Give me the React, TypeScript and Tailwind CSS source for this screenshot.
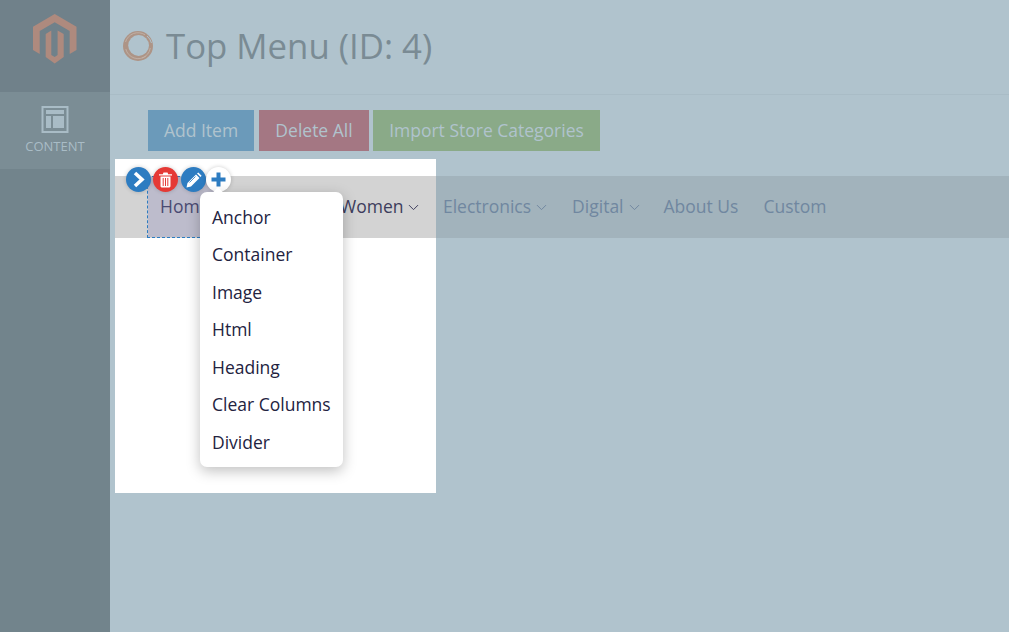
import { ChevronDown } from "lucide-react";

const font = "font-['Open_Sans','Noto_Sans',sans-serif]";

function Caret() {
  return <ChevronDown size={17} strokeWidth={1.4} className="ml-[2px] mr-[1px] mt-[2px]" />;
}

function Logo() {
  return (
    <svg width="44" height="50" viewBox="0 0 44 50">
      <path d="M21.7 0 L43.5 12.7 V36 L36.7 40 V17 L21.7 8.3 L6.7 17 V40 L0 36 V12.7 Z" fill="#ae8a7e" />
      <path d="M12.7 20 L18.3 16.5 V41 L21.7 43 L24.6 41 V16.5 L30.7 20 V43 L21.7 49.5 L12.7 43 Z" fill="#ae8a7e" />
    </svg>
  );
}

function Ring() {
  return (
    <svg width="32" height="32" viewBox="0 0 32 32" fill="none">
      <circle cx="16" cy="16" r="15" fill="#ad9486" />
      <circle cx="16.6" cy="15.5" r="10.4" fill="#b0c3cd" />
      <path d="M3.8 19 A12.8 12.8 0 0 0 24 26" stroke="#c4b5ab" strokeWidth="0.8" />
      <path d="M3.5 12 A13 13 0 0 1 23 4.8" stroke="#c4b5ab" strokeWidth="0.8" />
      <path d="M28.3 18 A13 13 0 0 1 20 28" stroke="#c4b5ab" strokeWidth="0.8" />
      <path d="M25 6 A14 14 0 0 1 29.5 13" stroke="#b0c3cd" strokeWidth="1" />
    </svg>
  );
}

export default function App() {
  const items = ["Anchor", "Container", "Image", "Html", "Heading", "Clear Columns", "Divider"];
  return (
    <div className={`${font} flex h-[632px] w-[1009px] overflow-hidden bg-[#b0c3cd]`}>
      <aside className="flex w-[110px] shrink-0 flex-col bg-[#72848c]">
        <div className="flex h-[92px] justify-center bg-[#70818a] pt-[14px]">
          <Logo />
        </div>
        <div className="flex h-[77px] flex-col items-center bg-[#7b8d95] pt-[14px] text-[#a9bcc6]">
          <svg width="28" height="28" viewBox="0 0 28 28" fill="none">
            <rect x="1.5" y="1" width="25" height="25" stroke="currentColor" strokeWidth="2" />
            <path d="M5 4 H23 V8 H5 Z M5 10 H10 V22 H5 Z M12 10 H23 V22 H12 Z" fill="currentColor" />
          </svg>
          <span className="mt-[3px] text-[13px] leading-[18px]">CONTENT</span>
        </div>
      </aside>

      <main className="flex min-w-0 flex-1 flex-col">
        <header className="flex h-[95px] shrink-0 items-center gap-[12px] border-b border-[#a9bcc6] pb-[2px] pl-[12px]">
          <Ring />
          <h1 className="text-[34.75px] font-normal leading-none text-[#7a8b94]">Top Menu (ID: 4)</h1>
        </header>

        <div className="mt-[15px] flex pl-[38px] text-[17.5px] text-[#b0c3cd]">
          <div className="flex h-[41px] w-[106px] items-center justify-center bg-[#6b9aba]">Add Item</div>
          <div className="ml-[5px] flex h-[41px] w-[110px] items-center justify-center bg-[#a47783]">Delete All</div>
          <div className="ml-[4px] flex h-[41px] w-[227px] items-center justify-center bg-[#8aaa88]">Import Store Categories</div>
        </div>

        <div className="relative ml-[5px] mt-[25px] h-[62px] bg-[#a2b3bc] text-[17.5px] text-[#7087a0]">
          <div className="absolute left-0 top-[-17px] h-[334px] w-[321px] bg-white" />
          <div className="absolute left-0 top-0 h-[62px] w-[321px] bg-[#d3d3d3]" />
          <div className="absolute left-[32px] top-0 h-[62px] w-[73px] border border-dashed border-[#2d7cc1] bg-[#bdbccc] bg-clip-padding" />

          <div className="relative flex h-full items-center pb-[2px]">
            <span className="ml-[45px] w-[180px] text-[#4a4a72]">Hom</span>
            <span className="flex items-center text-[#3d3d5c]">Women<Caret /></span>
            <span className="ml-[19.5px] flex items-center">Electronics<Caret /></span>
            <span className="ml-[21px] flex items-center">Digital<Caret /></span>
            <span className="ml-[20px]">About Us</span>
            <span className="ml-[25px]">Custom</span>
          </div>

          <div className="absolute left-[11px] top-[-9px] flex">
            <div className="flex h-[25px] w-[25px] items-center justify-center rounded-full bg-[#2d7cc1] text-white shadow-[0_0_4px_rgba(0,0,0,0.2)]">
              <svg width="13" height="17" viewBox="0 0 13 17" fill="none"><path d="M3 2 L10 8.5 L3 15" stroke="currentColor" strokeWidth="3.6" /></svg>
            </div>
            <div className="ml-[2px] flex h-[25px] w-[25px] items-center justify-center rounded-full bg-[#e53935] text-white shadow-[0_0_4px_rgba(0,0,0,0.2)]">
              <svg width="13" height="16" viewBox="0 0 13 16" fill="currentColor"><path d="M0 2.2 H3.8 L4.5 0.5 H8.5 L9.2 2.2 H13 V3.6 H0 Z M1.5 4.6 H11.5 V14.5 L10.5 15.5 H2.5 L1.5 14.5 Z" /><path d="M4.2 6 V14 M6.5 6 V14 M8.8 6 V14" stroke="#e53935" strokeWidth="1" /></svg>
            </div>
            <div className="ml-[3px] flex h-[25px] w-[25px] items-center justify-center rounded-full bg-[#2d7cc1] text-white shadow-[0_0_4px_rgba(0,0,0,0.2)]">
              <svg width="16" height="16" viewBox="0 0 16 16" fill="currentColor"><path d="M0.5 15.5 L1.5 11 L10 2.5 L13.5 6 L5 14.5 Z" /><path d="M11 1.5 L12.3 0.4 L15.6 3.7 L14.5 5 Z" /><path d="M3.5 10.5 L9.5 4.5" stroke="#2d7cc1" strokeWidth="0.8" /></svg>
            </div>
            <div className="flex h-[25px] w-[25px] items-center justify-center rounded-full bg-white text-[#2d7cc1] shadow-[0_0_4px_rgba(0,0,0,0.2)]">
              <svg width="15" height="15" viewBox="0 0 15 15" fill="currentColor"><path d="M5.5 0.5 H9.5 V5.5 H14.5 V9.5 H9.5 V14.5 H5.5 V9.5 H0.5 V5.5 H5.5 Z" /></svg>
            </div>
          </div>

          <div className="absolute left-[85px] top-[16px] w-[143px] rounded-[7px] bg-white pb-[5.25px] pl-[12px] pt-[6.75px] text-[17.5px] text-[#23233f] shadow-[0_4px_14px_rgba(0,0,0,0.25)]">
            <div className="absolute left-[14px] top-[-3px] h-[8px] w-[8px] rotate-45 bg-white" />
            {items.map((t) => (
              <div key={t} className="h-[37.5px] leading-[37.5px]">{t}</div>
            ))}
          </div>
        </div>
      </main>
    </div>
  );
}
